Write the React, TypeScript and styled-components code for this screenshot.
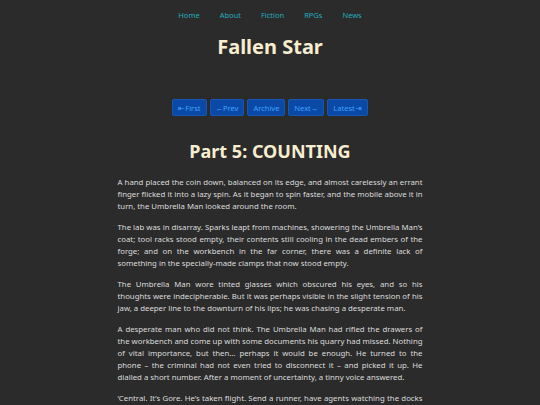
import styled, { createGlobalStyle } from 'styled-components'

const GlobalStyle = createGlobalStyle`
  html, body {
    margin: 0;
    padding: 0;
    background: #2b2b2b;
  }
  body {
    font-family: 'Noto Sans', 'Open Sans', sans-serif;
  }
`

const Page = styled.div`
  display: flex;
  flex-direction: column;
  align-items: center;
  min-height: 405px;
  background: #2b2b2b;
`

const Nav = styled.nav`
  display: flex;
  justify-content: center;
  gap: 20px;
  padding-top: 9px;
  height: 15px;
`

const NavLink = styled.a`
  font-size: 7.5px;
  color: #22aebf;
  text-decoration: none;
  line-height: 12px;
`

const Title = styled.h1`
  margin: 9px 0 0;
  font-size: 20px;
  font-weight: 700;
  line-height: 28px;
  color: #f7edcf;
`

const Pager = styled.div`
  display: flex;
  gap: 3px;
  margin-top: 38px;
`

const PagerButton = styled.a`
  display: flex;
  align-items: center;
  height: 17px;
  padding: 0 5px;
  box-sizing: border-box;
  background: #0a4aa6;
  border: 1px solid #1657b4;
  border-radius: 2px;
  color: #40a0ff;
  font-size: 7.5px;
  text-decoration: none;
`

const Heading = styled.h2`
  margin: 22px 0 0;
  font-size: 18px;
  font-weight: 700;
  line-height: 26px;
  color: #f7edcf;
`

const Story = styled.article`
  width: 305px;
  margin-top: 12px;
`

const Para = styled.p`
  margin: 0 0 9px;
  font-size: 7.8px;
  line-height: 12px;
  color: #dcdcdc;
  text-align: justify;
`

const links = ['Home', 'About', 'Fiction', 'RPGs', 'News']
const pager = ['⇤First', '←Prev', 'Archive', 'Next→', 'Latest⇥']

const paragraphs = [
  'A hand placed the coin down, balanced on its edge, and almost carelessly an errant finger flicked it into a lazy spin. As it began to spin faster, and the mobile above it in turn, the Umbrella Man looked around the room.',
  'The lab was in disarray. Sparks leapt from machines, showering the Umbrella Man’s coat; tool racks stood empty, their contents still cooling in the dead embers of the forge; and on the workbench in the far corner, there was a definite lack of something in the specially-made clamps that now stood empty.',
  'The Umbrella Man wore tinted glasses which obscured his eyes, and so his thoughts were indecipherable. But it was perhaps visible in the slight tension of his jaw, a deeper line to the downturn of his lips; he was chasing a desperate man.',
  'A desperate man who did not think. The Umbrella Man had rifled the drawers of the workbench and come up with some documents his quarry had missed. Nothing of vital importance, but then… perhaps it would be enough. He turned to the phone – the criminal had not even tried to disconnect it – and picked it up. He dialled a short number. After a moment of uncertainty, a tinny voice answered.',
  '‘Central. It’s Gore. He’s taken flight. Send a runner, have agents watching the docks and the harbour, and at the rail lines as well. I will be in touch.’',
]

const App = () => (
  <>
    <GlobalStyle />
    <Page>
      <Nav>
        {links.map((l) => (
          <NavLink key={l} href='#'>
            {l}
          </NavLink>
        ))}
      </Nav>
      <Title>Fallen Star</Title>
      <Pager>
        {pager.map((p) => (
          <PagerButton key={p} href='#'>
            {p}
          </PagerButton>
        ))}
      </Pager>
      <Heading>Part 5: COUNTING</Heading>
      <Story>
        {paragraphs.map((p, i) => (
          <Para key={i}>{p}</Para>
        ))}
      </Story>
    </Page>
  </>
)

export default App
